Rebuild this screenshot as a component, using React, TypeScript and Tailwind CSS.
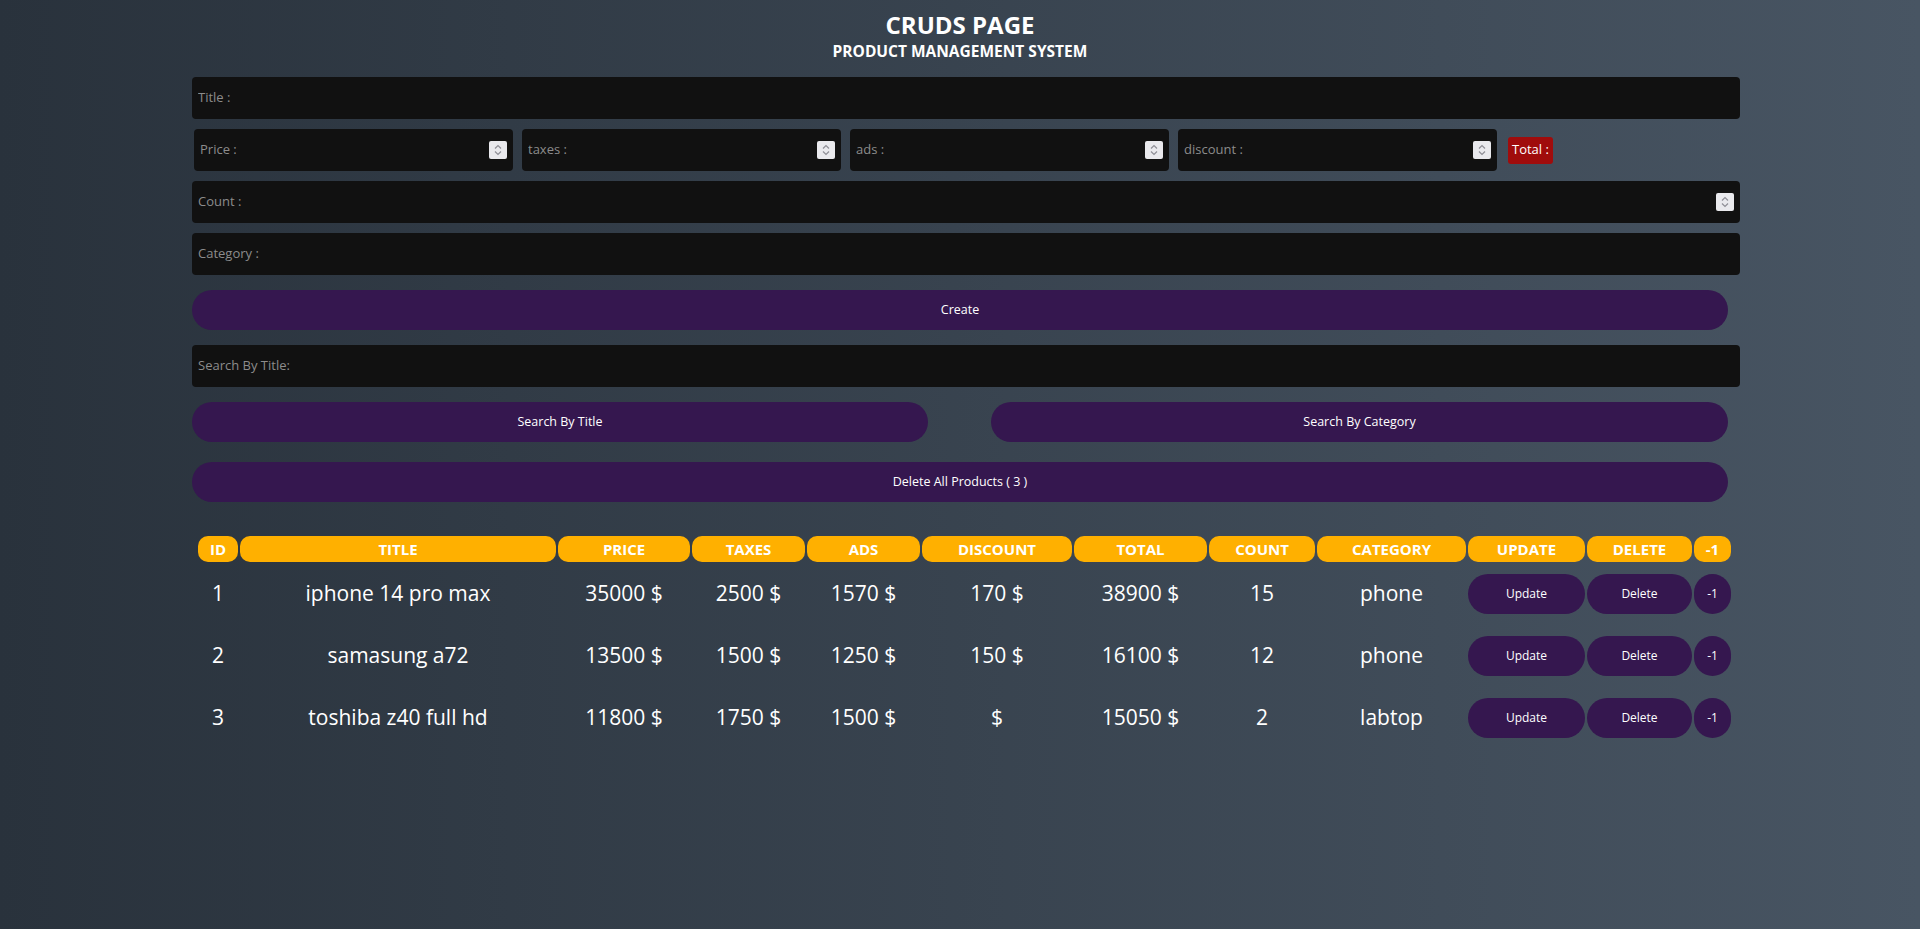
import React from "react";

const font = { fontFamily: '"Open Sans", "Noto Sans", Arial, sans-serif' };

type Product = {
  id: number;
  title: string;
  price: string;
  taxes: string;
  ads: string;
  discount: string;
  total: string;
  count: string;
  category: string;
};

const products: Product[] = [
  { id: 1, title: "iphone 14 pro max", price: "35000", taxes: "2500", ads: "1570", discount: "170", total: "38900", count: "15", category: "phone" },
  { id: 2, title: "samasung a72", price: "13500", taxes: "1500", ads: "1250", discount: "150", total: "16100", count: "12", category: "phone" },
  { id: 3, title: "toshiba z40 full hd", price: "11800", taxes: "1750", ads: "1500", discount: "", total: "15050", count: "2", category: "labtop" },
];

const headers = ["ID", "TITLE", "PRICE", "TAXES", "ADS", "DISCOUNT", "TOTAL", "COUNT", "CATEGORY", "UPDATE", "DELETE", "-1"];

function Spinner() {
  return (
    <div className="flex h-[18px] w-[18px] shrink-0 items-center justify-center rounded-[2px] bg-[#e9e9ed]">
      <svg width="18" height="18" viewBox="0 0 18 18" fill="none" stroke="#8e8e96" strokeWidth="1.2">
        <polyline points="6,7.5 9,4.5 12,7.5" />
        <polyline points="6,10.5 9,13.5 12,10.5" />
      </svg>
    </div>
  );
}

function Field({ placeholder, number, className }: { placeholder: string; number?: boolean; className: string }) {
  return (
    <div className={`flex h-[42px] items-center rounded-[4px] bg-[#111111] px-[6px] ${className}`}>
      <input
        placeholder={placeholder}
        className="min-w-0 flex-1 bg-transparent text-[13px] text-white outline-none placeholder:text-[#8c8c8c]"
        style={font}
      />
      {number && <Spinner />}
    </div>
  );
}

function PurpleButton({ label, className }: { label: string; className: string }) {
  return (
    <button className={`flex h-[40px] items-center justify-center rounded-full bg-[#35174f] text-[12.5px] text-white ${className}`}>
      {label}
    </button>
  );
}

export default function App() {
  return (
    <div className="min-h-[929px] w-full bg-linear-to-r from-[#29323c] to-[#485563]" style={font}>
      <div className="mx-auto w-[1536px]">
        {/* Heading */}
        <div className="pt-[9px] text-center text-white">
          <h2 className="text-[24px] font-bold leading-[31px]">CRUDS PAGE</h2>
          <p className="mt-[1px] text-[15.5px] font-bold leading-[20px]">PRODUCT MANAGEMENT SYSTEM</p>
        </div>

        {/* Inputs */}
        <div className="mt-[16px] flex flex-col gap-[10px]">
          <Field placeholder="Title :" className="w-[1548px]" />
          <div className="ml-[2px] flex items-center gap-[9px]">
            <Field placeholder="Price :" number className="w-[319px]" />
            <Field placeholder="taxes :" number className="w-[319px]" />
            <Field placeholder="ads :" number className="w-[319px]" />
            <Field placeholder="discount :" number className="w-[319px]" />
            <span className="ml-[2px] flex h-[27px] items-center rounded-[3px] bg-[#a00c0c] px-[4px] text-[13px] text-white">
              Total :
            </span>
          </div>
          <Field placeholder="Count :" number className="w-[1548px]" />
          <Field placeholder="Category :" className="w-[1548px]" />
        </div>

        <PurpleButton label="Create" className="mt-[15px] w-full" />

        <Field placeholder="Search By Title:" className="mt-[15px] w-[1548px]" />

        <div className="mt-[15px] flex justify-between">
          <PurpleButton label="Search By Title" className="w-[736px]" />
          <PurpleButton label="Search By Category" className="w-[737px]" />
        </div>

        <PurpleButton label="Delete All Products ( 3 )" className="mt-[20px] w-full" />

        {/* Table */}
        <div className="ml-[6px] mt-[34px] grid grid-cols-[40px_316px_132px_113px_113px_150px_133px_106px_149px_117px_105px_37px] gap-x-[2px] gap-y-[2px] text-white">
          {headers.map((h) => (
            <div
              key={h}
              className="flex h-[26px] items-center justify-center rounded-[10px] bg-[#ffb000] text-[15px] font-bold"
            >
              {h}
            </div>
          ))}
          {products.map((p) => (
            <React.Fragment key={p.id}>
              <div className="flex h-[60px] items-center justify-center text-[21px]">{p.id}</div>
              <div className="flex h-[60px] items-center justify-center text-[21px]">{p.title}</div>
              <div className="flex h-[60px] items-center justify-center text-[21px]">{p.price} $</div>
              <div className="flex h-[60px] items-center justify-center text-[21px]">{p.taxes} $</div>
              <div className="flex h-[60px] items-center justify-center text-[21px]">{p.ads} $</div>
              <div className="flex h-[60px] items-center justify-center text-[21px]">
                {p.discount ? `${p.discount} $` : "$"}
              </div>
              <div className="flex h-[60px] items-center justify-center text-[21px]">{p.total} $</div>
              <div className="flex h-[60px] items-center justify-center text-[21px]">{p.count}</div>
              <div className="flex h-[60px] items-center justify-center text-[21px]">{p.category}</div>
              <div className="flex h-[60px] items-center">
                <button className="h-[40px] w-full rounded-full bg-[#35174f] text-[12px] text-white">Update</button>
              </div>
              <div className="flex h-[60px] items-center">
                <button className="h-[40px] w-full rounded-full bg-[#35174f] text-[12px] text-white">Delete</button>
              </div>
              <div className="flex h-[60px] items-center">
                <button className="h-[40px] w-full rounded-full bg-[#35174f] text-[12px] text-white">-1</button>
              </div>
            </React.Fragment>
          ))}
        </div>
      </div>
    </div>
  );
}
